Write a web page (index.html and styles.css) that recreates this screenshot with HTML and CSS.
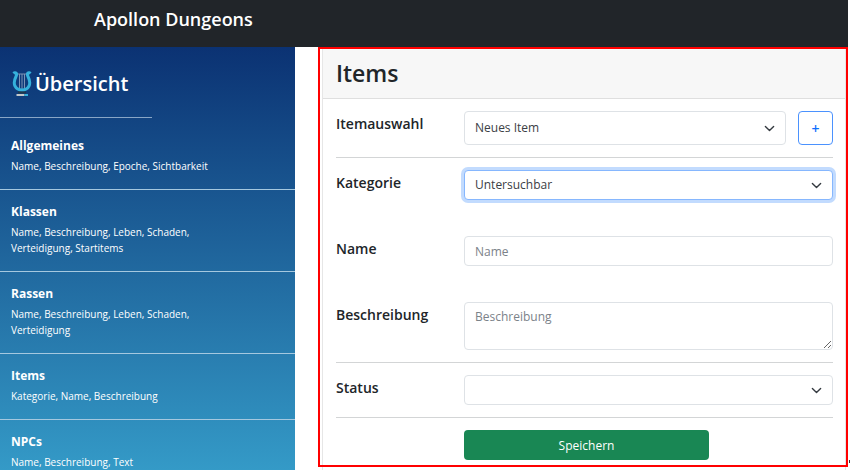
FILE: index.html
```html
<!DOCTYPE html>
<html lang="de">
<head>
  <meta charset="utf-8">
  <meta name="viewport" content="width=device-width, initial-scale=1">
  <title>Apollon Dungeons</title>
  <link rel="stylesheet" href="styles.css">
</head>
<body>
  <header class="navbar">
    <a class="brand" href="#">Apollon Dungeons</a>
  </header>
  <div class="layout">
    <nav class="sidebar">
      <div class="sidebar-head">
        <svg class="lyre" viewBox="0 0 20 26" aria-hidden="true">
          <path class="strings" d="M7.500 3v15M10 3v16M12.500 3v15"/>
          <path class="bar" d="M3 3h14"/>
          <path class="frame" d="M1.500 2.500C3.500 .5 5.500 2.500 4 5.500C2.500 8.500 1.500 12 3 15C4.500 18 7 19 10 19S15.500 18 17 15C18.500 12 17.500 8.500 16 5.500C14.500 2.500 16.500 .5 18.500 2.500"/>
          <path class="stem" d="M6 21.500h8"/>
          <path class="foot" d="M4.500 24h8"/>
          <path class="foot-tip" d="M12.500 24h3.500"/>
        </svg>
        <h2>Übersicht</h2>
      </div>
      <hr class="sidebar-rule">
      <ul class="menu">
        <li><a href="#"><strong>Allgemeines</strong><span>Name, Beschreibung, Epoche, Sichtbarkeit</span></a></li>
        <li><a href="#"><strong>Klassen</strong><span>Name, Beschreibung, Leben, Schaden, Verteidigung, Startitems</span></a></li>
        <li><a href="#"><strong>Rassen</strong><span>Name, Beschreibung, Leben, Schaden, Verteidigung</span></a></li>
        <li><a href="#"><strong>Items</strong><span>Kategorie, Name, Beschreibung</span></a></li>
        <li><a href="#"><strong>NPCs</strong><span>Name, Beschreibung, Text</span></a></li>
      </ul>
    </nav>
    <main class="content">
      <section class="card">
        <h1 class="card-head">Items</h1>
        <form class="card-body">
          <div class="row">
            <label for="item">Itemauswahl</label>
            <div class="field picker">
              <select id="item" class="control tall"><option>Neues Item</option></select>
              <button class="add" type="button" aria-label="Item hinzufügen">+</button>
            </div>
          </div>
          <hr>
          <div class="row spaced">
            <label for="category">Kategorie</label>
            <select id="category" class="field control active"><option>Untersuchbar</option></select>
          </div>
          <div class="row spaced">
            <label for="name">Name</label>
            <input id="name" class="field control" type="text" placeholder="Name">
          </div>
          <div class="row">
            <label for="description">Beschreibung</label>
            <textarea id="description" class="field control" placeholder="Beschreibung"></textarea>
          </div>
          <hr>
          <div class="row">
            <label for="status">Status</label>
            <select id="status" class="field control"><option></option></select>
          </div>
          <hr>
          <div class="row">
            <button class="save" type="submit">Speichern</button>
          </div>
        </form>
      </section>
    </main>
  </div>
</body>
</html>
```

FILE: styles.css
```css
* {
  box-sizing: border-box;
}

body {
  display: flex;
  flex-direction: column;
  height: 100vh;
  margin: 0;
  padding-right: 2px;
  overflow: hidden;
  background: #fff;
  color: #212529;
  font-family: "Open Sans", "Noto Sans", sans-serif;
  font-size: 12px;
}

h1,
h2,
ul {
  margin: 0;
  padding: 0;
}

a {
  color: inherit;
  text-decoration: none;
}

.navbar {
  flex: none;
  height: 47px;
  padding: 7px 94px;
  background: #212529;
  color: #fff;
}

.brand {
  font-size: 18px;
  font-weight: 600;
  line-height: 24px;
}

.layout {
  display: flex;
  flex: 1;
  gap: 23px;
  min-height: 0;
}

.sidebar {
  flex: none;
  width: 295px;
  overflow: hidden;
  background: linear-gradient(#0b3273, #349ac7);
  color: #fff;
}

.sidebar-head {
  display: flex;
  align-items: center;
  gap: 3px;
  height: 70px;
  padding: 3px 12px 0;
}

.sidebar-head h2 {
  font-size: 20px;
  font-weight: 600;
  line-height: 28px;
}

.lyre {
  width: 20px;
  height: 26px;
  fill: none;
}

.frame {
  stroke: #35b1dc;
  stroke-width: 3;
}

.strings,
.bar {
  stroke: #7c93b5;
}

.stem {
  stroke: #20384a;
  stroke-width: 2;
}

.foot {
  stroke: #c3c9cc;
  stroke-width: 2;
}

.foot-tip {
  stroke: #35b1dc;
  stroke-width: 2;
}

.sidebar-rule {
  width: 152px;
  margin: 0 0 6px;
  border: 0;
  border-top: 1px solid #89a6c6;
}

.menu {
  list-style: none;
}

.menu a {
  display: block;
  padding: 13px 80px 15px 11px;
  border-bottom: 1px solid #a5c8df;
}

.menu strong,
.menu span {
  display: block;
}

.menu strong {
  margin-bottom: 3px;
  font-size: 12px;
  font-weight: 700;
  line-height: 18px;
}

.menu span {
  font-size: 10px;
  line-height: 16px;
}

.content {
  position: relative;
  flex: 1;
  padding: 2px 2px 0 4px;
}

.content::before {
  position: absolute;
  right: -2px;
  bottom: 7px;
  width: 1px;
  height: 3px;
  background: #333;
  content: "";
}

.content::after {
  position: absolute;
  inset: 0 0 3px;
  border: 2px solid #f00;
  content: "";
  pointer-events: none;
}

.card {
  height: 100%;
  border: 1px solid #e6e6e6;
  border-width: 0 1px;
}

.card-head {
  padding: 8px 13px 9px;
  border-bottom: 1px solid #dfdfdf;
  background: #f7f7f7;
  font-size: 23px;
  font-weight: 600;
  line-height: 32px;
}

.card-body {
  padding: 12px 12px 12px 13px;
}

.card-body hr {
  margin: 12px 0;
  border: 0;
  border-top: 1px solid #d3d5d6;
}

.row {
  display: grid;
  grid-template-columns: 128fr 245fr 124fr;
}

.spaced {
  margin-bottom: 36px;
}

.row label {
  padding-top: 3px;
  font-size: 14px;
  font-weight: 600;
  line-height: 20px;
}

.field {
  grid-column: 2 / -1;
}

.control {
  width: 100%;
  height: 30px;
  margin: 0;
  padding: 4px 10px;
  border: 1px solid #dee2e6;
  border-radius: 4px;
  outline: 0;
  background-color: #fff;
  color: #3b4045;
  font: inherit;
  line-height: 20px;
}

.control::placeholder {
  color: #7b8289;
  opacity: 1;
}

select.control {
  appearance: none;
  background-image: url("data:image/svg+xml,%3Csvg xmlns='http://www.w3.org/2000/svg' viewBox='0 0 16 16'%3E%3Cpath fill='none' stroke='%23343a40' stroke-linecap='round' stroke-linejoin='round' stroke-width='2' d='m2 5 6 6 6-6'/%3E%3C/svg%3E");
  background-position: right 10px center;
  background-repeat: no-repeat;
  background-size: 11px;
}

textarea.control {
  display: block;
  height: 48px;
  resize: vertical;
}

.control.tall {
  height: 34px;
}

.control.active {
  border-color: #86b7fe;
  box-shadow: 0 0 0 3px #c2dbfe;
}

.picker {
  display: flex;
  gap: 12px;
}

.add {
  flex: none;
  width: 35px;
  padding: 0;
  border: 1px solid #4b92fe;
  border-radius: 4px;
  background: #fff;
  color: #0d6efd;
  font: 600 14px "Open Sans", "Noto Sans", sans-serif;
}

.save {
  grid-column: 2;
  height: 30px;
  padding: 0;
  border: 0;
  border-radius: 4px;
  background: #198754;
  color: #fff;
  font: inherit;
}
```
